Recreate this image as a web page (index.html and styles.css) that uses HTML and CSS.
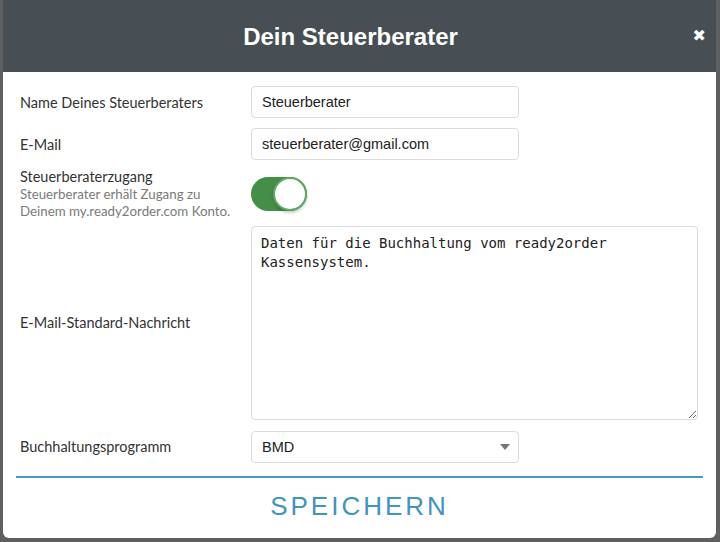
FILE: index.html
```html
<!DOCTYPE html>
<html lang="de">
<head>
  <meta charset="UTF-8">
  <title>Dein Steuerberater</title>
  <link rel="stylesheet" href="styles.css">
</head>
<body>

  <div class="modal">
    <div class="modal-header">
      <h2>Dein Steuerberater</h2>
      <span class="close">&#10006;</span>
    </div>

    <form class="modal-body" id="advisorForm">
      <div class="row row-name">
        <label for="name">Name Deines Steuerberaters</label>
        <input type="text" id="name" value="Steuerberater">
      </div>

      <div class="row row-mail">
        <label for="mail">E-Mail</label>
        <input type="text" id="mail" value="steuerberater@gmail.com">
      </div>

      <div class="row row-access">
        <div class="label-block">
          <div>Steuerberaterzugang</div>
          <div class="hint">Steuerberater erhält Zugang zu<br>Deinem my.ready2order.com Konto.</div>
        </div>
        <div class="toggle on"><span class="knob"></span></div>
      </div>

      <div class="row row-message">
        <label for="msg">E-Mail-Standard-Nachricht</label>
        <textarea id="msg">Daten für die Buchhaltung vom ready2order Kassensystem.</textarea>
      </div>

      <div class="row row-program">
        <label for="program">Buchhaltungsprogramm</label>
        <div class="select">
          <span>BMD</span>
          <span class="caret"></span>
        </div>
      </div>
    </form>

    <div class="modal-footer">
      <button type="submit" form="advisorForm">SPEICHERN</button>
    </div>
  </div>

</body>
</html>
```

FILE: styles.css
```css
body {
  margin: 0;
  background: #5e5f60;
  font-family: Lato, "Open Sans", sans-serif;
  height: 542px;
  overflow: hidden;
}
.modal {
  width: 713px;
  height: 538px;
  margin-left: 3px;
  background: white;
  border-radius: 0 0 6px 6px;
  display: flex;
  flex-direction: column;
  overflow: hidden;
}
.modal-header {
  height: 72px;
  background: #474f54;
  display: flex;
  align-items: center;
  justify-content: center;
  padding: 2px 18px 0 0;
  box-sizing: border-box;
  position: relative;
  flex-shrink: 0;
}
.modal-header h2 {
  margin: 0;
  color: white;
  font-family: "Liberation Sans", Arial, sans-serif;
  font-size: 24px;
  font-weight: bold;
}
.close {
  position: absolute;
  right: 10px;
  top: 26px;
  color: white;
  font-size: 16px;
  font-family: "DejaVu Sans", sans-serif;
  font-weight: bold;
}
.modal-body {
  padding: 14px 18px 0 17px;
  flex: 1;
}
.row {
  display: flex;
  align-items: center;
  color: #333;
  font-size: 14.5px;
}
.row > label,
.row > .label-block {
  width: 231px;
  flex-shrink: 0;
}
.row-name,
.row-mail {
  margin-bottom: 10px;
}
.row-access {
  margin-top: -2px;
  margin-bottom: 5px;
}
.label-block {
  line-height: 17.5px;
}
.hint {
  color: #7a7a7a;
  font-size: 13.3px;
}
.row-message {
  margin-bottom: 11px;
}
input,
.select {
  box-sizing: border-box;
  width: 268px;
  height: 32px;
  border: 1px solid #dcdcdc;
  border-radius: 4px;
  padding: 0 10px;
  font-family: "Liberation Sans", Arial, sans-serif;
  font-size: 14.5px;
  color: #222;
}
.toggle {
  width: 56px;
  height: 34px;
  border-radius: 17px;
  background: #448f48;
  position: relative;
  margin: 6px 0;
}
.knob {
  position: absolute;
  right: 0;
  top: 0;
  width: 34px;
  height: 34px;
  box-sizing: border-box;
  border-radius: 50%;
  background: white;
  border: 2px solid #5ea862;
  box-shadow: 0 2px 3px rgba(0, 0, 0, 0.2);
}
textarea {
  box-sizing: border-box;
  width: 447px;
  height: 194px;
  border: 1px solid #dcdcdc;
  border-radius: 4px;
  padding: 7px 9px;
  font-family: "DejaVu Sans Mono", monospace;
  font-size: 14px;
  line-height: 19px;
  color: #222;
  resize: vertical;
}
.select {
  display: flex;
  align-items: center;
  justify-content: space-between;
  padding-right: 8px;
}
.caret {
  width: 0;
  height: 0;
  border-left: 5px solid transparent;
  border-right: 5px solid transparent;
  border-top: 6px solid #777;
}
.modal-footer {
  margin: 0 13px;
  border-top: 2px solid #4a97c4;
  height: 60px;
  display: flex;
  align-items: center;
  justify-content: center;
}
.modal-footer button {
  background: none;
  border: none;
  color: #4193c0;
  font-family: "Liberation Sans", Arial, sans-serif;
  font-size: 26px;
  letter-spacing: 3px;
  cursor: pointer;
  padding: 0;
  margin-top: -3px;
}
```
